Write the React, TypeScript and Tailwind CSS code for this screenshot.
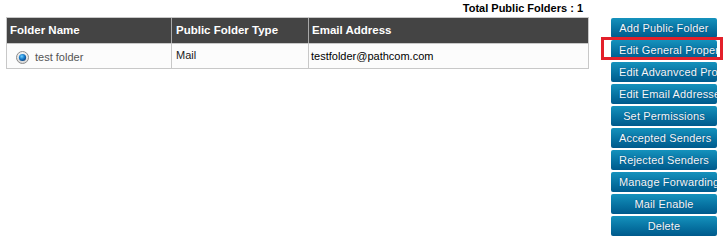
import React from "react";

const ACTIONS = [
  "Add Public Folder",
  "Edit General Properties",
  "Edit Advanvced Properties",
  "Edit Email Addresses",
  "Set Permissions",
  "Accepted Senders",
  "Rejected Senders",
  "Manage Forwarding",
  "Mail Enable",
  "Delete",
];

function Radio() {
  return (
    <svg width="13" height="13" viewBox="0 0 13 13" className="shrink-0">
      <defs>
        <radialGradient id="dot" cx="40%" cy="35%" r="70%">
          <stop offset="0%" stopColor="#6fd0ff" />
          <stop offset="55%" stopColor="#1478c8" />
          <stop offset="100%" stopColor="#0a3c78" />
        </radialGradient>
        <linearGradient id="ring" x1="0" y1="0" x2="0" y2="1">
          <stop offset="0%" stopColor="#f4f4f4" />
          <stop offset="100%" stopColor="#d8d8d8" />
        </linearGradient>
      </defs>
      <circle cx="6.5" cy="6.5" r="6" fill="url(#ring)" stroke="#8c8c8c" strokeWidth="1" />
      <circle cx="6.5" cy="6.5" r="3.6" fill="url(#dot)" />
    </svg>
  );
}

export default function App() {
  return (
    <div
      className="relative h-[240px] w-[726px] bg-white text-[11px]"
      style={{ fontFamily: '"Liberation Sans", Arial, sans-serif' }}
    >
      <div className="flex">
        <div className="ml-[6px] w-[583px]">
          <div className="flex h-[17px] items-center justify-end pr-[6px] text-[11px] font-bold text-black">
            Total Public Folders : 1
          </div>
          <div className="border border-[#c8c8c8]">
            <div className="grid h-[25px] grid-cols-[165px_137px_1fr] bg-[#444444] text-[11.5px] font-bold text-white">
              <div className="flex items-center border-r border-[#a8a8a8] pl-[3px]">Folder Name</div>
              <div className="flex items-center border-r border-[#a8a8a8] pl-[4px]">Public Folder Type</div>
              <div className="flex items-center pl-[3px]">Email Address</div>
            </div>
            <div className="grid h-[25px] grid-cols-[165px_137px_1fr] border-t border-[#c8c8c8] bg-[#fcfcfc] text-black">
              <div className="flex items-center gap-[6px] border-r border-[#c8c8c8] pl-[9px] pt-[3px] text-[#555555]">
                <Radio />
                <span>test folder</span>
              </div>
              <div className="flex items-center border-r border-[#c8c8c8] pb-[2px] pl-[4px] text-[#222222]">Mail</div>
              <div className="flex items-center pl-[2px]">testfolder@pathcom.com</div>
            </div>
          </div>
        </div>

        <div className="ml-[22px] mt-[18px] flex w-[106px] flex-col gap-[2px]">
          {ACTIONS.map((label) => (
            <div
              key={label}
              className="h-[20px] overflow-hidden whitespace-nowrap rounded-[2px] bg-gradient-to-b from-[#1592bd] to-[#005a8c] px-[8px] text-center text-[11px] leading-[20px] tracking-[0.15px] text-[#f4faff] [text-shadow:0_0_1px_rgba(0,40,80,0.8)]"
            >
              {label}
            </div>
          ))}
        </div>
      </div>

      <div className="pointer-events-none absolute left-[601px] top-[37px] h-[23px] w-[122px] border-[3px] border-[#e3202a]" />
    </div>
  );
}
